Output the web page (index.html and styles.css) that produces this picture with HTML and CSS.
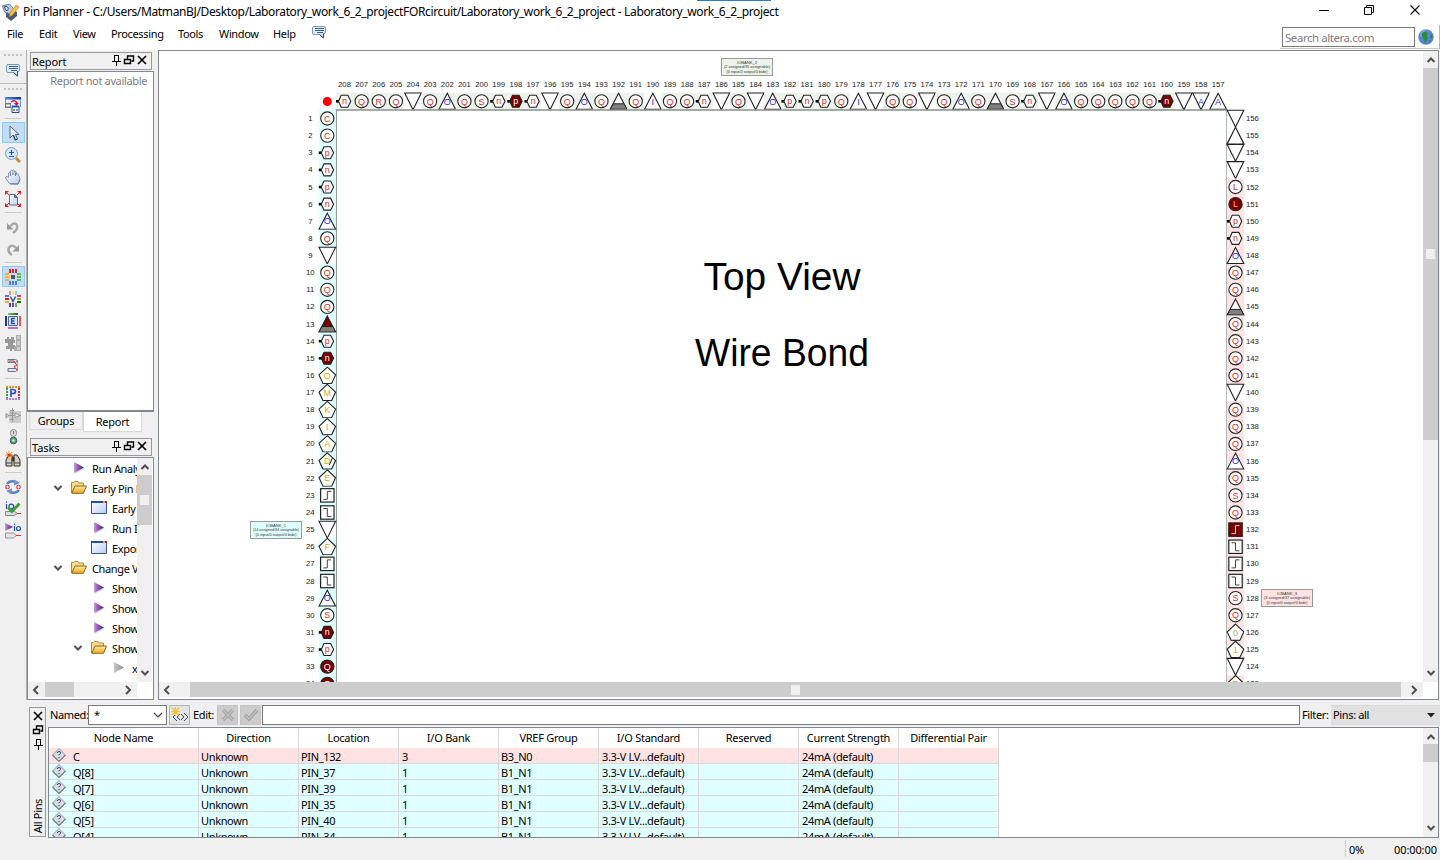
FILE: index.html
```html
<!DOCTYPE html>
<html lang="en">
<head>
<meta charset="utf-8">
<title>Pin Planner</title>
<link rel="stylesheet" href="styles.css">
</head>
<body>
<svg class="defs" width="0" height="0">
  <defs>
    <linearGradient id="gPurple" x1="0" x2="1"><stop offset="0" stop-color="#b9a8d8"/><stop offset=".4" stop-color="#a04cb8"/><stop offset="1" stop-color="#1d4466"/></linearGradient>
    <linearGradient id="gGray" x1="0" x2="1"><stop offset="0" stop-color="#c8c8c8"/><stop offset="1" stop-color="#8c8c8c"/></linearGradient>
    <linearGradient id="gFold" x1="0" x2="0" y1="0" y2="1"><stop offset="0" stop-color="#ffe9a0"/><stop offset="1" stop-color="#f0a818"/></linearGradient>
    <linearGradient id="gBlue" x1="0" x2="1" y1="0" y2="1"><stop offset="0" stop-color="#fff"/><stop offset="1" stop-color="#b8cdf4"/></linearGradient>
    <linearGradient id="gBar" x1="0" x2="1"><stop offset="0" stop-color="#4f86e0"/><stop offset="1" stop-color="#12308c"/></linearGradient>
    <linearGradient id="gGreen" x1="0" x2="1"><stop offset="0" stop-color="#7cc46c"/><stop offset="1" stop-color="#1f6a1a"/></linearGradient>
    <symbol id="chat" viewBox="0 0 16 16"><path d="M3 2.500h10a1.500 1.500 0 0 1 1.500 1.500v4a1.500 1.500 0 0 1-1.500 1.500h-.5V14L8.500 10.500H3A1.500 1.500 0 0 1 1.500 9V4A1.500 1.500 0 0 1 3 2.500z" fill="#dfeafa" stroke="#7b98ba"/><path d="M4 4.500h9M4 6.500h9M6 8.500h6" stroke="#3c5f8c"/><path d="M12.500 9.500V14L8.500 10.500" stroke="#2f4f78" fill="none"/></symbol>
    <symbol id="pin" viewBox="0 0 12 12"><path d="M4.500 1v6M4 1.500h5M8.500 1v6M2 7.500h9M6.500 8v4" stroke="#000" fill="none"/></symbol>
    <symbol id="float" viewBox="0 0 12 12"><path d="M4.500 5V2h6v5h-2M4 2h7M1.500 5.500h6v4h-6z M1 5.500h7" stroke="#000" stroke-width="1.400" fill="none"/></symbol>
    <symbol id="close" viewBox="0 0 12 12"><path d="M2 2l8 8M10 2l-8 8" stroke="#000" stroke-width="1.700"/></symbol>
    <symbol id="up" viewBox="0 0 10 10"><path d="M1.500 7L5 3.500 8.500 7" fill="none" stroke="#505050" stroke-width="2"/></symbol>
    <symbol id="down" viewBox="0 0 10 10"><path d="M1.500 3L5 6.500 8.500 3" fill="none" stroke="#505050" stroke-width="2"/></symbol>
    <symbol id="left" viewBox="0 0 10 10"><path d="M7 1L3 5l4 4" fill="none" stroke="#505050" stroke-width="2"/></symbol>
    <symbol id="right" viewBox="0 0 10 10"><path d="M3 1l4 4-4 4" fill="none" stroke="#505050" stroke-width="2"/></symbol>
    <symbol id="play" viewBox="0 0 16 16"><path d="M3.500 3l10.500 5.500L4 14z" fill="#bbb" opacity=".5"/><path d="M3 2l10 5.500L3 13z" fill="url(#gPurple)"/></symbol>
    <symbol id="playoff" viewBox="0 0 16 16"><path d="M3 2l10 5.500L3 13z" fill="url(#gGray)"/></symbol>
    <symbol id="folder" viewBox="0 0 16 16"><path d="M.5 13V2.500h2l1-1H7l1 1.500h4.500v3" fill="#f6dc8c" stroke="#b28c32"/><path d="M.8 13.300L4 6h11.500L12.500 13.300z" fill="url(#gFold)" stroke="#8a6a1c"/></symbol>
    <symbol id="win" viewBox="0 0 16 16"><path d="M.5 1.500h15v12H.5z" fill="url(#gBlue)" stroke="#3c5588"/><path d="M0 1h16v2H0z" fill="#1e50b4"/><path d="M12 1h2v2h-2z" fill="#f8a030"/><path d="M14 1h2v2h-2z" fill="#b02010"/></symbol>
    <symbol id="node" viewBox="0 0 16 14"><path d="M8 .5L14.500 7 8 13.500 1.500 7z" fill="#dcdcdc" stroke="#9a9a9a"/><path d="M14.500 7L8 13.500 1.500 7" fill="none" stroke="#44566e"/><path d="M6.300 5q0-1.500 1.700-1.500t1.700 1.300q0 .9-1 1.300-.7.400-.7 1.300M8 9v1.300" fill="none" stroke="#2846a8"/></symbol>
  </defs>
</svg>
<div class="window">
  <header class="titlebar">
    <svg class="logo" width="18" height="18" viewBox="0 0 18 18"><path d="M4 9l4-3 7 3v4l-6 5-5-4z" fill="#4a5c74"/><path d="M.5 3l7-2 6 7-5 3-6-2z" fill="#b8cce2" stroke="#6a80a0"/><path d="M2.500 3.500h2.500q2.500 1.500.5 4H4z" fill="#dce8f4" stroke="#39506c"/><path d="M14 2l3 2-6.500 8-3 1.500.5-3.500z" fill="#f8c23c" stroke="#c48a1a" stroke-width=".7"/><path d="M14 2l3 2-1.300 1.500-2.800-2z" fill="#f4a0a0"/></svg>
    <span class="caption">Pin Planner - C:/Users/MatmanBJ/Desktop/Laboratory_work_6_2_projectFORcircuit/Laboratory_work_6_2_project - Laboratory_work_6_2_project</span>
    <i class="glint"></i>
    <svg class="winbtns" width="110" height="20" viewBox="0 0 110 20"><path d="M4 10.500h10" stroke="#000"/><path d="M49.500 7.500h7v7h-7zM51.500 7V5.500h7v7H57" fill="none" stroke="#000"/><path d="M95.500 5.500l9 9M104.500 5.500l-9 9" stroke="#000" stroke-width="1.100"/></svg>
  </header>
  <nav class="menubar">
    <span class="m1">File</span><span class="m2">Edit</span><span class="m3">View</span><span class="m4">Processing</span><span class="m5">Tools</span><span class="m6">Window</span><span class="m7">Help</span>
    <svg class="mchat" width="16" height="16"><use href="#chat"/></svg>
    <div class="searchwrap">
      <div class="search">Search altera.com</div>
      <svg width="16" height="16" viewBox="0 0 16 16"><circle cx="8" cy="8" r="7.700" fill="#5585d8"/><circle cx="6" cy="5" r="4" fill="#86abe8" opacity=".7"/><path d="M4 4l4-2 2 2-1 3 1 2-2 4-1 2-1-5-2-2zM13 5l2 2-1 3-2-2zM11 11l2 1-2 2z" fill="#2d8a3c"/></svg>
    </div>
  </nav>
  <div class="work">
    <aside class="tools">
      <div class="grip g1"></div>
      <div class="tb"><svg width="16" height="16"><use href="#chat"/></svg></div>
      <div class="rule"></div>
      <div class="grip g2"></div>
      <div class="tb"><svg width="16" height="16" viewBox="0 0 16 16"><path d="M0 0h16v13H0z" fill="#e8eefc"/><path d="M0 0h16v2.500H0z" fill="url(#gBar)"/><path d="M.5 2v7M15.500 2v8" stroke="#6b8acb"/><path d="M0 6h6v5H0z" fill="#777"/><path d="M1 7.500h4v2H1z" fill="#fff"/><path d="M6 5q4-3 6 1" fill="none" stroke="#e02048" stroke-width="1.500"/><path d="M9 6h5l-2.500 3z" fill="#c01040"/><path d="M7 9.500h7v6H7z" fill="#eef4ff" stroke="#234a9a"/><path d="M7 9.500h7" stroke="#2458c0" stroke-width="2"/><path d="M9 12v2M12 12v2" stroke="#234"/></svg></div>
      <div class="sep"></div>
      <div class="tb on"><svg width="16" height="16" viewBox="0 0 16 16"><path d="M5 1v12l3-3 2 5 2.500-1-2-4.500H14z" fill="url(#gBlue)" stroke="#54657c"/><path d="M8.500 10l2 5 2-1" fill="none" stroke="#243850"/></svg></div>
      <div class="tb"><svg width="16" height="16" viewBox="0 0 16 16"><path d="M11 11l4 4" stroke="#c88838" stroke-width="3"/><circle cx="6.500" cy="6.500" r="6" fill="#d4e8fc" stroke="#7f9cbc"/><path d="M4 5.500h5M6.500 3v5M4 9.500h5" stroke="#2450c0" stroke-width="1.200"/></svg></div>
      <div class="tb"><svg width="16" height="16" viewBox="0 0 16 16"><path d="M4.500 14.500L.8 9.500Q0 7.500 2 7.500l1.500 1V4q.8-1.500 2 0V2q1-1.500 2 0v-.6q1-1.200 2 .3V3q1.500-1.200 2 .3v2q1.800-1 2 .4L15 10l-2 5z" fill="url(#gBlue)" stroke="#8092b0"/><path d="M5.500 4v3M8 2.500V6M10.500 3.500V7M5 15h8l2-4.500" fill="none" stroke="#6a7a98"/></svg></div>
      <div class="tb"><svg width="16" height="16" viewBox="0 0 16 16"><path d="M4.500 3.500h5.500l2.500 3v7.500h-8z" fill="url(#gBlue)" stroke="#5c6f8c"/><path d="M9.500 3.500v3h3z" fill="#88a" stroke="#567"/><path d="M0 0h4L0 4zM16 0v4l-4-4zM0 16v-4l4 4zM16 16h-4l4-4z" fill="#e41c24"/><path d="M1 1l3 3M15 1l-3 3M1 15l3-3M15 15l-3-3" stroke="#e41c24"/></svg></div>
      <div class="sep"></div>
      <div class="tb"><svg width="16" height="16" viewBox="0 0 16 16"><path d="M8 14q5-3 4-7.500Q10 2 5.500 7" fill="none" stroke="#a6a6a6" stroke-width="2.400"/><path d="M2 4v6.500h6.500z" fill="#999"/></svg></div>
      <div class="tb"><svg width="16" height="16" viewBox="0 0 16 16"><path d="M7 14Q2 11 4 6.500q3-4 7 .5" fill="none" stroke="#a6a6a6" stroke-width="2.400"/><path d="M14 4v6.500H7.500z" fill="#999"/></svg></div>
      <div class="sep"></div>
      <div class="tb on"><svg width="16" height="16" viewBox="0 0 16 16"><path d="M6 6h4v4H6z" fill="#555"/><path d="M5 0v4M8 0v4M11 0v4" stroke="#e41c24" stroke-width="2"/><path d="M5 12v4M8 12v4M11 12v4" stroke="#4a7fe0" stroke-width="2"/><path d="M0 5h4M0 8h4M0 11h4" stroke="#ffb020" stroke-width="2"/><path d="M12 5h4M12 8h4M12 11h4" stroke="#5cb850" stroke-width="2"/></svg></div>
      <div class="tb"><svg width="16" height="16" viewBox="0 0 16 16"><path d="M5 0v4" stroke="#c894e0" stroke-width="2"/><path d="M8 0v4" stroke="#ffe860" stroke-width="2"/><path d="M11 0v4" stroke="#70dcdc" stroke-width="2"/><path d="M5 12v4" stroke="#3452c0" stroke-width="2"/><path d="M8 12v4" stroke="#8c34a8" stroke-width="2"/><path d="M11 12v4" stroke="#5cb850" stroke-width="2"/><path d="M0 5h4" stroke="#4a7fe0" stroke-width="2"/><path d="M0 8h4" stroke="#e41c24" stroke-width="2"/><path d="M0 11h4" stroke="#ffb020" stroke-width="2"/><path d="M12 5h4" stroke="#e03c80" stroke-width="2"/><path d="M12 8h4" stroke="#a8a010" stroke-width="2"/><path d="M12 11h4" stroke="#1c681c" stroke-width="2"/><path d="M5.500 5.500L8 10.500l2.500-5" fill="none" stroke="#3c5cb0" stroke-width="1.600"/></svg></div>
      <div class="tb"><svg width="16" height="16" viewBox="0 0 16 16"><path d="M3 0h10v2H3z" fill="url(#gGreen)"/><path d="M3 14h10v2H3z" fill="#b070d0"/><path d="M0 3h2v10H0z" fill="#1c3c98"/><path d="M14 3h2v10h-2z" fill="#f05058"/><path d="M3.500 3.500h9v9h-9z" fill="#dce8fc" stroke="#52688c"/><path d="M10 5.500H6.500v5H10M6.500 8H9.500" fill="none" stroke="#2450b0" stroke-width="1.300"/></svg></div>
      <div class="tb"><svg width="16" height="16" viewBox="0 0 16 16"><path d="M0 4h2V2h2v2h2V2h3v3h1v3H8v2h2v4H7v2H5v-2H1v-3h2V8H0z" fill="#999"/><path d="M11 0h5v16h-5zM9 11h2v5H9z" fill="#aaa"/><path d="M12 1h3v3h-3zM12 6h3v4h-3zM12 12h3v3h-3z" fill="#ccc"/></svg></div>
      <div class="tb"><svg width="16" height="16" viewBox="0 0 16 16"><path d="M3 2.500h7.500l2.500 1.500-2.500 1.500H3zM3 11.500h7.500l2.500 1.500-2.500 1.500H3z" fill="#dde5f0" stroke="#65778f"/><path d="M4 4h5l3 4.500-3 1L12 13" fill="none" stroke="#e02c34"/><path d="M12.500 5v7" stroke="#e88"/></svg></div>
      <div class="sep"></div>
      <div class="tb"><svg width="16" height="16" viewBox="0 0 16 16"><path d="M2 3v12" stroke="#3aa050" stroke-width="2" stroke-dasharray="2 1"/><path d="M1 2h14" stroke="#e48c20" stroke-width="2" stroke-dasharray="2 1"/><path d="M14 3v12" stroke="#d42838" stroke-width="2" stroke-dasharray="2 1"/><path d="M1 14h14" stroke="#a878d8" stroke-width="2" stroke-dasharray="2 1"/><path d="M6 12V4.500h2q2.500 0 2.500 2t-2.500 2H6" fill="none" stroke="#2856c0" stroke-width="1.700"/></svg></div>
      <div class="tb"><svg width="16" height="16" viewBox="0 0 16 16"><path d="M4 4h12v12H4z" fill="#ccc"/><path d="M1 6.500l3 2L1 11zM4 8.500h12M7.500 1v14M5 3.500h4M5 6h4M5 12.500h4" fill="#ccc" stroke="#999"/><path d="M10 6l5 2.500-5 2z" fill="#eee" stroke="#999"/></svg></div>
      <div class="tb"><svg width="16" height="16" viewBox="0 0 16 16"><rect x="5.500" y=".5" width="6" height="7" rx="3" fill="#ddd" stroke="#888"/><path d="M8.500 2v3" stroke="#777"/><circle cx="8.500" cy="11.500" r="3.300" fill="#54a848" stroke="#345480"/><circle cx="8.500" cy="11.500" r="1.300" fill="#d8f0ff"/></svg></div>
      <div class="tb"><svg width="16" height="16" viewBox="0 0 16 16"><path d="M1 15V9l3-5h3v11zM9 15V4h3l3 5v6z" fill="#d8cfc0" stroke="#302c28"/><path d="M7 6h2v4H7zM1 12h6M9 12h6" fill="#333" stroke="#444"/><path d="M4 0v8M0 4h8M1 1l6 6M7 1L1 7" stroke="#f09820"/><circle cx="4" cy="4" r="1.500" fill="#e82c30"/></svg></div>
      <div class="sep"></div>
      <div class="tb"><svg width="16" height="16" viewBox="0 0 16 16"><path d="M2 5q3-4 9-2M14 11q-3 4-9 2" fill="none" stroke="#5a80c4" stroke-width="2.400"/><path d="M9 .5l6 3.500-6 2.500zM7 15.500L1 12l6-2.500z" fill="#6f8fcc"/><circle cx="2.500" cy="8" r="2.300" fill="#dc2850"/><circle cx="13.500" cy="8" r="2.300" fill="#dc2850"/><path d="M1 8h3M2.500 6.500v3M12 8h3M13.500 6.500v3" stroke="#fff"/></svg></div>
      <div class="tb"><svg width="16" height="16" viewBox="0 0 16 16"><path d="M1.500 3v5M1.500 .5v1.300M4 5.500a2.300 2.300 0 1 1 4.600 0 2.300 2.300 0 1 1-4.600 0" fill="none" stroke="#2450b0" stroke-width="1.200"/><path d="M.5 10.500h9l3 2-3 2H.5z" fill="#d8dce2" stroke="#888"/><path d="M12 12.500h4" stroke="#e02c34"/><path d="M3 6.500l4 4 7.500-8" fill="none" stroke="#3f9c3c" stroke-width="2.800"/></svg></div>
      <div class="tb"><svg width="16" height="16" viewBox="0 0 16 16"><path d="M0 0l8 4-8 4z" fill="url(#gPurple)"/><path d="M9.500 3v5M9.500 .5v1.300M11.500 5.500a2 2 0 1 1 4 0 2 2 0 1 1-4 0" fill="none" stroke="#2450b0" stroke-width="1.200"/><path d="M.5 10h8l3 2.500-3 2.500H.5z" fill="#dfe3e8" stroke="#999"/><path d="M11 12.500h5" stroke="#e02c34"/></svg></div>
    </aside>
    <section class="docks">
      <div class="dockhead"><span>Report</span><svg width="12" height="12"><use href="#pin"/></svg><svg width="12" height="12"><use href="#float"/></svg><svg width="12" height="12"><use href="#close"/></svg></div>
      <div class="report"><span>Report not available</span></div>
      <div class="tabs"><div class="tab t1">Groups</div><div class="tab t2">Report</div></div>
      <div class="dockhead tasks"><span>Tasks</span><svg width="12" height="12"><use href="#pin"/></svg><svg width="12" height="12"><use href="#float"/></svg><svg width="12" height="12"><use href="#close"/></svg></div>
      <div class="treebox">
        <div class="treetop">
          <div class="tree" id="tree"></div>
          <div class="vs"><svg width="10" height="10"><use href="#up"/></svg><div class="thumb tv"><i></i></div><svg width="10" height="10"><use href="#down"/></svg></div>
        </div>
        <div class="hs dockhs"><svg width="10" height="10"><use href="#left"/></svg><div class="thumb"></div><svg width="10" height="10"><use href="#right"/></svg></div>
      </div>
    </section>
    <main class="view">
      <div class="viewtop">
        <svg id="chip" class="chip" width="1264" height="630" viewBox="159 52 1264 630"></svg>
        <div class="vs big"><svg width="10" height="10"><use href="#up"/></svg><div class="thumb bv"><i></i></div><svg width="10" height="10"><use href="#down"/></svg></div>
      </div>
      <div class="hs mainhs"><svg width="10" height="10"><use href="#left"/></svg><div class="thumb"><i></i></div><svg width="10" height="10"><use href="#right"/></svg></div>
    </main>
  </div>
  <section class="bottom">
    <div class="side"><svg width="12" height="12"><use href="#close"/></svg><svg width="12" height="12"><use href="#float"/></svg><svg width="12" height="12"><use href="#pin"/></svg><span>All Pins</span></div>
    <div class="pins">
      <div class="filterbar">
        <label class="lname">Named:</label>
        <div class="combo">*<svg width="10" height="10"><path d="M1 3l4 4 4-4" fill="none" stroke="#444" stroke-width="1.200"/></svg></div>
        <div class="sq"><svg width="18" height="16" viewBox="0 0 18 16"><path d="M6 6L2 10l4 4M9 7l-3 3 3 3M10 7l3 3-3 3M13 6l4 4-4 4" fill="none" stroke="#34506c"/><path d="M4.500 0v9M0 4.500h9M1 1l7 7M8 1L1 8" stroke="#f5c22a" stroke-width="1.200"/></svg></div>
        <label class="ledit">Edit:</label>
        <div class="sq off"><svg width="16" height="16" viewBox="0 0 16 16"><path d="M3 3l10 10M13 3L3 13" stroke="#a4a4a4" stroke-width="3.500"/><path d="M3 3l10 10M13 3L3 13" stroke="#c0c0c0" stroke-width="1.500"/></svg></div>
        <div class="sq off s2"><svg width="16" height="16" viewBox="0 0 16 16"><path d="M2 8l4 4 8-9" fill="none" stroke="#a0a0a0" stroke-width="3.500"/><path d="M2 8l4 4 8-9" fill="none" stroke="#c0c0c0" stroke-width="1.500"/></svg></div>
        <div class="edit"></div>
        <label class="lfilter">Filter:</label>
        <div class="filter">Pins: all<svg width="8" height="5"><path d="M0 0h8L4 4.500z" fill="#222"/></svg></div>
      </div>
      <div class="tablebox">
        <div class="grid" id="grid"></div>
        <div class="vs tvs"><svg width="10" height="10"><use href="#up"/></svg><div class="thumb"></div><svg width="10" height="10"><use href="#down"/></svg></div>
      </div>
    </div>
  </section>
  <footer class="status"><span class="pct">0%</span><span class="time">00:00:00</span></footer>
</div>
<script src="app.js"></script>
</body>
</html>
```
FILE: styles.css
```css
* { box-sizing: border-box; }
body { margin: 0; background: #f0f0f0; font: 11px/14px "Noto Sans", sans-serif; color: #000; letter-spacing: -0.35px; }
svg { display: block; flex: none; }
.defs { position: absolute; }
.window { width: 1440px; height: 860px; display: flex; flex-direction: column; overflow: hidden; }
.titlebar { height: 24px; background: #fff; display: flex; align-items: center; position: relative; padding-left: 2px; flex: none; }
.caption { font-size: 12px; margin-left: 3px; letter-spacing: -0.365px; white-space: nowrap; flex: 1; }
.glint { position: absolute; left: 697px; top: 0; width: 74px; height: 1px; background: #2a7ad0; }
.winbtns { margin-right: 15px; margin-top: -4px; }
.menubar { height: 26px; flex: none; background: #fff; display: flex; align-items: flex-start; padding: 3px 0 0 7px; }
.menubar span { flex: none; }
.m1 { width: 32px; } .m2 { width: 34px; } .m3 { width: 38px; } .m4 { width: 67px; } .m5 { width: 41px; } .m6 { width: 54px; } .m7 { width: 38px; }
.mchat { margin-top: -3px; }
.searchwrap { display: flex; margin-left: auto; align-items: center; gap: 3px; border-right: 1px solid #b8b8b8; border-bottom: 1px solid #c8c8c8; height: 24px; width: 160px; padding: 0 4px 0 2px; margin-top: -2px; }
.search { width: 133px; height: 20px; border: 1px solid #7a7a7a; color: #808080; font-size: 11.500px; line-height: 19px; padding-left: 2px; letter-spacing: -0.45px; }
.work { display: flex; height: 650px; flex: none; }
.tools { width: 27px; border-right: 1px solid #b0b0b0; display: flex; flex-direction: column; align-items: center; flex: none; }
.grip { width: 18px; height: 2px; background: repeating-linear-gradient(90deg, #c0c0c0 0 2px, transparent 2px 4px); flex: none; }
.g1 { margin: 4px 0 3px; }
.g2 { margin: 4px 0 4px; }
.tb { width: 23px; height: 22px; display: flex; justify-content: center; align-items: center; flex: none; }
.on { background: #c2ddf3; border: 1px solid #90c8f6; height: 21px; margin-bottom: 1px; }
.rule { height: 1px; width: 26px; background: #bcbcbc; margin-top: 2px; flex: none; }
.sep { width: 17px; height: 6px; flex: none; background: linear-gradient(#ccc, #ccc) 0 2px / 17px 1px no-repeat; }
.docks { width: 131px; padding-top: 2px; flex: none; }
.dockhead { height: 18px; width: 122px; margin-left: 3px; border: 1px solid #999; display: flex; align-items: center; padding: 0 3px 0 1px; gap: 1px; }
.dockhead span { flex: 1; padding-top: 2px; letter-spacing: -0.1px; }
.dockhead svg { margin-top: -2px; }
.report { width: 127px; height: 341px; margin-top: 1px; background: #fff; border: 1px solid #828790; border-width: 1px 1px 2px; color: #808080; text-align: right; padding: 2px 6px; white-space: nowrap; }
.tabs { display: flex; height: 26px; padding-left: 2px; letter-spacing: -0.25px; }
.tab { border: 1px solid #d9d9d9; border-top: 0; text-align: center; }
.t1 { width: 54px; height: 18px; line-height: 18px; }
.t2 { width: 59px; height: 20px; background: #fff; line-height: 20px; }
.tasks { height: 18px; }
.treebox { width: 127px; height: 243px; margin-top: 1px; border: 1px solid #828790; background: #fff; }
.treetop { display: flex; height: 224px; }
.tree { width: 109px; overflow: hidden; }
.node { height: 20px; display: flex; align-items: center; white-space: nowrap; }
.node .arrow { width: 10px; margin-right: 8px; margin-left: -1px; }
.node span { margin-left: 5px; padding-top: 1px; }
.vs { width: 15px; background: #f0f0f0; display: flex; flex-direction: column; align-items: center; justify-content: space-between; padding: 4px 0; }
.thumb { background: #cdcdcd; display: flex; align-items: center; justify-content: center; }
.thumb i { width: 9px; height: 10px; background: #f0f0f0; }
.vs .thumb { width: 15px; }
.tv { height: 50px; margin: 3px 0 auto; }
.hs { height: 15px; background: #f0f0f0; display: flex; align-items: center; }
.dockhs { width: 109px; padding: 0 4px 0 3px; justify-content: space-between; }
.dockhs .thumb { width: 29px; height: 15px; margin: 0 auto 0 4px; }
.view { flex: 1; background: #fff; border: 1px solid #828790; margin-right: 1px; }
.viewtop { display: flex; height: 631px; }
.chip { margin-top: 1px; font-family: "Liberation Sans", Arial, sans-serif; letter-spacing: 0; }
.big { padding-top: 4px; }
.bv { height: 372px; margin: 3px 0 auto; }
.mainhs { padding: 0 4px 0 3px; width: 1264px; justify-content: space-between; }
.mainhs .thumb { width: 1211px; height: 15px; margin-left: 10px; }
.bottom { height: 138px; flex: none; display: flex; }
.side { margin: 7px 2px 1px 29px; width: 17px; border: 1px solid #999; display: flex; flex-direction: column; align-items: center; padding-top: 2px; gap: 2px; }
.side span { margin-top: auto; writing-mode: vertical-rl; transform: rotate(180deg); padding-top: 3px; }
.pins { flex: 1; display: flex; flex-direction: column; }
.filterbar { height: 27px; display: flex; align-items: center; padding-top: 3px; flex: none; }
.lname { width: 40px; padding-left: 2px; }
.combo { width: 79px; height: 20px; background: #fff; border: 1px solid #7a7a7a; padding: 0 3px 0 5px; display: flex; align-items: center; justify-content: space-between; }
.sq { width: 21px; height: 20px; border: 1px solid #b4b4b4; background: #e4e4e4; display: flex; align-items: center; justify-content: center; margin-left: 2px; }
.ledit { width: 22px; margin-left: 3px; }
.off { background: #ccc; border-color: #c4c4c4; }
.s2 { margin-left: 2px; }
.edit { flex: 1; height: 20px; background: #fff; border: 1px solid #7a7a7a; margin-left: 1px; }
.lfilter { width: 31px; padding-left: 2px; }
.filter { width: 109px; height: 20px; background: #e1e1e1; display: flex; align-items: center; justify-content: space-between; padding: 0 5px 0 2px; border: 1px solid #d8d8d8; border-width: 1px 0; }
.tablebox { height: 112px; border: 1px solid #828790; background: #fff; display: flex; justify-content: space-between; overflow: hidden; margin-right: 1px; }
.grid { display: grid; grid-template-columns: 150px repeat(8, 100px); width: 950px; align-content: start; overflow: hidden; }
.grid > div { border-right: 1px solid #d8d8d8; white-space: nowrap; overflow: hidden; }
.th { height: 20px; text-align: center; line-height: 20px; letter-spacing: -0.25px; }
.td { height: 16px; border-bottom: 1px solid #d8d8d8; padding-left: 2px; line-height: 17px; background: #e0ffff; }
.td.c2, .td.c4, .td.c6 { padding-left: 3px; }
.grid .pink { background: #ffe3e3; }
.name { display: flex; gap: 6px; }
.tvs .thumb { height: 18px; margin: 2px 0 auto; }
.status { height: 22px; display: flex; justify-content: flex-end; line-height: 23px; }
.pct { border-left: 1px solid #d0d0d0; padding-left: 3px; width: 49px; height: 17px; margin-top: 2px; line-height: 19px; }
.time { width: 46px; letter-spacing: -0.1px; }
.num { font-size: 7.700px; fill: #222; }
.ltr { font-size: 9px; text-anchor: middle; }
.big-label { font-size: 38px; }
.tiny { font-size: 4px; text-anchor: middle; fill: #333; }
```
FILE: app.js
```js
const P = 17.13;
// Pin code: letter plus shape; shapes: c circle, h hexagon, p pentagon, u/d triangle, g ground, r/f clock edge; "*" marks an assigned pin.
const top_ = 'nh Qc Rc Qc d Qc Ou Qc Sc nh ph* nh d Qc Ou Qc g Qc Iu Qc Qc nh d Qc d Ou ph nh ph Qc Iu d Qc Qc d Qc Ou Qc g Sc nh d Ou Qc Qc Qc Qc Qc nh* d Ad Au'.split(' ');
const left = 'Cc Cc ph nh ph nh Ou Qc d Qc Qc Qc g* ph nh* Op Mp Kp Ip Ap Dp Ep r f d Fp r f Ou Sc nh* ph Qc* Qc*'.split(' ');
const right = 'd u d d Lc Lc* ph nh Ou Qc Qc g Qc Qc Qc Qc d Qc Qc Qc Ou Qc Sc Qc r* f r f Sc Qc 0p 1p d Dp'.split(' ');

function pin(code, x, y, band) {
  const on = code.endsWith('*');
  const c = code.replace('*', '');
  const shape = c[c.length - 1];
  const letter = c.length > 1 ? c[0] : '';
  const fill = on ? '#780000' : '#fff';
  const st = `fill="${fill}" stroke="#222" stroke-width="1.100"`;
  const white = shape === 'd' || c === 'u' || letter === 'I' && shape === 'u' || c === 'Au';
  let s = `<rect x="${x - 8.6}" y="${y - 8.6}" width="17.2" height="17.2" fill="${white ? '#fff' : band}"/>`;
  let ink = '#e02c20';
  let ly = 3.2;
  if (shape === 'c') s += `<circle cx="${x}" cy="${y}" r="6.600" ${st}/>`;
  if (shape === 'h') { s += `<path d="M${x - 8.5} ${y}h3.500" stroke="#000" stroke-width="2.600"/><path d="M${x - 6} ${y}l2.700-6h6.600l3 6-3 6h-6.600z" ${st}/>`; ly = 2.8; }
  if (shape === 'p') { s += `<path d="M${x} ${y - 8.3}l8.300 7.800-4 8.500h-8.600l-4-8.500z" ${st}/>`; ink = '#d0b010'; }
  if (shape === 'u') { s += `<path d="M${x} ${y - 8}l8.300 16h-16.600z" ${st}/>`; ink = '#2828e8'; }
  if (shape === 'd') { s += `<path d="M${x} ${y + 8.5}l8.300-16.800h-16.600z" ${st}/>`; ink = '#2828e8'; }
  if (c === 'u') s += `<path d="M${x} ${y - 8.5}l8.300 16.800h-16.600z" ${st}/>`;
  if (shape === 'g') s += `<path d="M${x} ${y - 8}l8.300 16h-16.600z" ${st}/><path d="M${x - 5.5} ${y + 2.5}h11l2.800 5.500h-16.600z" fill="#808080" stroke="#222"/>`;
  if (shape === 'r' || shape === 'f') {
    const d = shape === 'r' ? `M${x - 4} ${y + 4}h4v-8h4` : `M${x - 4} ${y - 4}h4v8h4`;
    s += `<rect x="${x - 6.7}" y="${y - 6.7}" width="13.4" height="13.4" fill="${fill}" stroke="#222" stroke-width="1.200"/><path d="${d}" fill="none" stroke="${on ? '#e8c8c8' : '#444'}"/>`;
  }
  if (letter) {
    if (on) ink = letter === 'L' ? '#ffb060' : '#fff';
    if (letter === '0') ink = '#b0b060';
    s += `<text class="ltr" x="${x}" y="${y + ly}" fill="${ink}">${letter}</text>`;
    if (letter === 'D' && x < 400) s += `<path d="M${x + 2} ${y + 4}l3-7" stroke="#222"/>`;
  }
  return s;
}

let out = '';
top_.forEach((c, i) => {
  const x = 344.5 + i * P;
  out += pin(c, x, 101.3, '#ebf3eb') + `<text class="num" x="${x}" y="87" text-anchor="middle">${208 - i}</text>`;
});
out += '<path d="M337 110h890" stroke="#8a908a" stroke-width="1.300"/><path d="M336.300 109v590M1227 109v590" stroke="#8f9b9b" stroke-width="1.500"/>';
left.forEach((c, i) => {
  const y = 118.5 + i * P;
  out += pin(c, 327.3, y, '#e0ffff') + `<text class="num" x="310.300" y="${y + 2.5}" text-anchor="middle">${i + 1}</text>`;
});
right.forEach((c, i) => {
  const y = 118.5 + i * P;
  out += pin(c, 1235.5, y, '#ffe3e3') + `<text class="num" x="1252.300" y="${y + 2.5}" text-anchor="middle">${156 - i}</text>`;
});
out += '<circle cx="327.300" cy="101.500" r="4.500" fill="#f00"/>';

function bank(x, y, fill, lines) {
  let s = `<rect x="${x}" y="${y}" width="51" height="17" fill="${fill}" stroke="#999"/>`;
  lines.forEach((t, i) => {
    const w = [20, 46, 41][i];
    s += `<text class="tiny" x="${x + 25.5}" y="${y + 5 + i * 4.8}" textLength="${w}" lengthAdjust="spacingAndGlyphs">${t}</text>`;
  });
  return s;
}
out += bank(721.5, 58.5, '#ebf3eb', ['IOBANK_2', '(2 assigned/35 assignable)', '(0 input/2 output/0 bidir)']);
out += bank(250.5, 521.5, '#e0ffff', ['IOBANK_1', '(14 assigned/34 assignable)', '(0 input/0 output/0 bidir)']);
out += bank(1261.5, 589.5, '#ffe3e3', ['IOBANK_3', '(3 assigned/37 assignable)', '(0 input/0 output/0 bidir)']);
out += '<text class="big-label" x="703.500" y="290" textLength="157" lengthAdjust="spacingAndGlyphs">Top View</text><text class="big-label" x="695" y="366" textLength="174" lengthAdjust="spacingAndGlyphs">Wire Bond</text>';
document.getElementById('chip').innerHTML = out;

const tree = [
  [2, 'play', 'Run Analysis', 0], [1, 'folder', 'Early Pin Planning', 1], [3, 'win', 'Early Pin Planning'],
  [3, 'play', 'Run I/O Assignment'], [3, 'win', 'Export'], [1, 'folder', 'Change View', 1],
  [3, 'play', 'Show'], [3, 'play', 'Show'], [3, 'play', 'Show'], [2, 'folder', 'Show', 1], [4, 'playoff', 'x']
];
document.getElementById('tree').innerHTML = tree.map(([lv, icon, text, open]) => {
  const pad = open ? (lv === 1 ? 26 : 46) : { 2: 43, 3: 63, 4: 83 }[lv];
  const arrow = open ? '<svg class="arrow" width="10" height="10"><use href="#down"/></svg>' : '';
  return `<div class="node" style="padding-left:${pad}px">${arrow}<svg width="16" height="16"><use href="#${icon}"/></svg><span>${text}</span></div>`;
}).join('');

const heads = ['Node Name', 'Direction', 'Location', 'I/O Bank', 'VREF Group', 'I/O Standard', 'Reserved', 'Current Strength', 'Differential Pair'];
const rows = [['C', 132, 3, 'B3_N0'], ['Q[8]', 37, 1, 'B1_N1'], ['Q[7]', 39, 1, 'B1_N1'], ['Q[6]', 35, 1, 'B1_N1'], ['Q[5]', 40, 1, 'B1_N1'], ['Q[4]', 34, 1, 'B1_N1']];
document.getElementById('grid').innerHTML = heads.map(h => `<div class="th">${h}</div>`).join('') + rows.map((r, k) => {
  const cls = 'td' + (k ? '' : ' pink');
  return `<div class="${cls} name"><svg width="16" height="14"><use href="#node"/></svg>${r[0]}</div>` +
    ['Unknown', 'PIN_' + r[1], r[2], r[3], '3.3-V LV...default)', '', '24mA (default)', ''].map((t, i) => `<div class="${cls} c${i}">${t}</div>`).join('');
}).join('');
```
